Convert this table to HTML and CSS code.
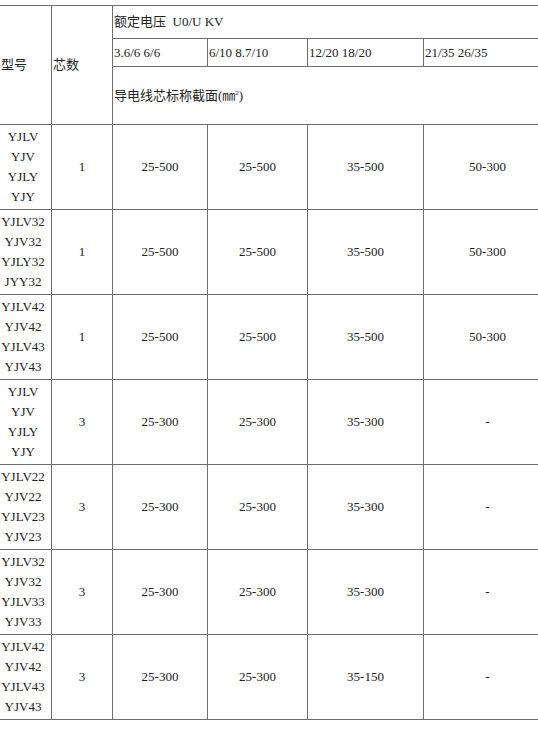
FILE: index.html
```html
<!DOCTYPE html>
<html lang="zh-CN">
<head>
<meta charset="utf-8">
<title>电缆规格表</title>
<link rel="stylesheet" href="styles.css">
</head>
<body>
<table class="spec">
  <colgroup>
    <col class="c1"><col class="c2"><col class="c3"><col class="c4"><col class="c5"><col class="c6">
  </colgroup>
  <tr class="h1">
    <td class="head first" rowspan="3">型号</td>
    <td class="head" rowspan="3">芯数</td>
    <td class="head" colspan="4">额定电压&nbsp; U0/U KV</td>
  </tr>
  <tr class="h2">
    <td class="head">3.6/6 6/6</td>
    <td class="head">6/10 8.7/10</td>
    <td class="head">12/20 18/20</td>
    <td class="head">21/35 26/35</td>
  </tr>
  <tr class="h3">
    <td class="head" colspan="4">导电线芯标称截面(㎜<sup>2</sup>)</td>
  </tr>
  <tr class="r"><td class="name">YJLV<br>YJV<br>YJLY<br>YJY</td><td>1</td><td>25-500</td><td>25-500</td><td>35-500</td><td>50-300</td></tr>
  <tr class="r"><td class="name">YJLV32<br>YJV32<br>YJLY32<br>JYY32</td><td>1</td><td>25-500</td><td>25-500</td><td>35-500</td><td>50-300</td></tr>
  <tr class="r"><td class="name">YJLV42<br>YJV42<br>YJLV43<br>YJV43</td><td>1</td><td>25-500</td><td>25-500</td><td>35-500</td><td>50-300</td></tr>
  <tr class="r"><td class="name">YJLV<br>YJV<br>YJLY<br>YJY</td><td>3</td><td>25-300</td><td>25-300</td><td>35-300</td><td>-</td></tr>
  <tr class="r"><td class="name">YJLV22<br>YJV22<br>YJLV23<br>YJV23</td><td>3</td><td>25-300</td><td>25-300</td><td>35-300</td><td>-</td></tr>
  <tr class="r"><td class="name">YJLV32<br>YJV32<br>YJLV33<br>YJV33</td><td>3</td><td>25-300</td><td>25-300</td><td>35-300</td><td>-</td></tr>
  <tr class="r"><td class="name">YJLV42<br>YJV42<br>YJLV43<br>YJV43</td><td>3</td><td>25-300</td><td>25-300</td><td>35-150</td><td>-</td></tr>
</table>
</body>
</html>
```
FILE: styles.css
```css
html, body {
  margin: 0;
  padding: 0;
  overflow: hidden;
  background: #ffffff;
}

.spec {
  border-collapse: collapse;
  table-layout: fixed;
  width: 557px;
  margin: 5px 0 0 -6px;
  font-family: "Liberation Serif", "Noto Sans CJK SC", serif;
  font-size: 13px;
  color: #222222;
}

.c1 { width: 57px; }
.c2 { width: 61px; }
.c3 { width: 95px; }
.c4 { width: 100px; }
.c5 { width: 116px; }
.c6 { width: 128px; }

.spec td {
  border: 1px solid #6e6e6e;
  padding: 0 1px;
  text-align: center;
  vertical-align: middle;
  line-height: 20px;
  white-space: nowrap;
}

.spec td.head {
  text-align: left;
}

.spec td.first {
  padding-left: 6px;
}

.h1 { height: 33px; }
.h2 { height: 28px; }
.h3 { height: 58px; }
.r { height: 85px; }

.spec sup {
  font-size: 7px;
  line-height: 0;
  vertical-align: 5px;
}
```
